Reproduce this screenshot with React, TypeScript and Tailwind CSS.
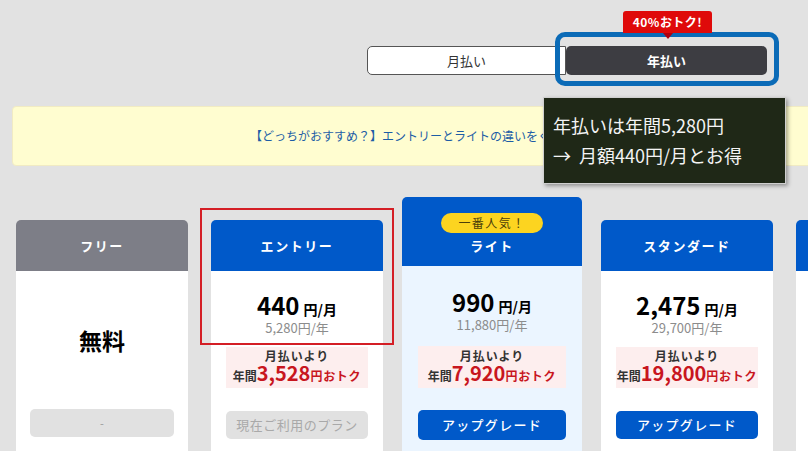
import React from 'react';

type Plan = {
  name: string;
  price?: string;
  yearly?: string;
  saving?: string;
  tone: 'free' | 'blue';
  current?: boolean;
  popular?: boolean;
};

const plans: Plan[] = [
  { name: 'フリー', tone: 'free' },
  { name: 'エントリー', price: '440', yearly: '5,280円/年', saving: '3,528', tone: 'blue', current: true },
  { name: 'ライト', price: '990', yearly: '11,880円/年', saving: '7,920', tone: 'blue', popular: true },
  { name: 'スタンダード', price: '2,475', yearly: '29,700円/年', saving: '19,800', tone: 'blue' },
  { name: 'プレミアム', price: '4,950', yearly: '59,400円/年', saving: '39,600', tone: 'blue' },
];

function PlanCard({ plan }: { plan: Plan }) {
  const headerBg = plan.tone === 'free' ? 'bg-[#7d7e87]' : 'bg-[#0059c9]';

  return (
    <div
      className={`relative shrink-0 flex flex-col ${
        plan.popular ? 'w-[180px] -mx-[4px] -mt-[23px]' : 'w-[172px]'
      }`}
    >
      {plan.popular ? (
        <div className={`${headerBg} rounded-t-[5px] h-[69px] pt-[16px] flex flex-col items-center`}>
          <div className="w-[102px] h-[20px] rounded-full bg-[#fcd420] flex items-center justify-center text-[12px] tracking-[0.12em] text-[#4b3f0a]">
            一番人気！
          </div>
          <div className="mt-[6px] text-white text-[13px] font-bold tracking-[0.12em] leading-[13px]">{plan.name}</div>
        </div>
      ) : (
        <div className={`${headerBg} rounded-t-[5px] h-[51px] flex items-center justify-center`}>
          <div className="text-white text-[13px] font-bold tracking-[0.12em] leading-none">{plan.name}</div>
        </div>
      )}

      <div className={`${plan.popular ? 'bg-[#ebf5ff] px-[16px]' : 'bg-white px-[15px]'} h-[200px] flex flex-col`}>
        {plan.tone === 'free' ? (
          <>
            <div className="h-[138px] flex items-center justify-center text-[23px] font-bold text-black">無料</div>
            <div className="-mx-px h-[28px] rounded-[5px] bg-[#e1e1e1] flex items-center justify-center text-[11px] text-[#999]">
              -
            </div>
          </>
        ) : (
          <>
            <div
              className={`flex items-baseline justify-center text-black font-bold ${
                plan.popular ? 'pt-[23px]' : 'pt-[21px]'
              }`}
            >
              <span className="text-[24px] leading-[26px]">{plan.price}</span>
              <span className="ml-[4px] text-[14px]">円/月</span>
            </div>
            <div className="text-center text-[13px] leading-[16px] text-[#8c8c8c]">{plan.yearly}</div>
            <div
              className={`bg-[#fdeeee] flex flex-col items-center justify-center font-bold whitespace-nowrap ${
                plan.popular ? 'mt-[13px] h-[42px]' : 'mt-[11px] h-[41px]'
              }`}
            >
              <div className="text-[12px] leading-[14px] text-[#333] tracking-[0.08em]">月払いより</div>
              <div className="flex items-baseline leading-[20px]">
                <span className="text-[12px] text-[#333]">年間</span>
                <span className="text-[20px] text-[#c8161e]">{plan.saving}</span>
                <span className="text-[12px] text-[#c8161e] tracking-[0.06em]">円おトク</span>
              </div>
            </div>
            {plan.current ? (
              <div className="mt-[23px] h-[28px] rounded-[5px] bg-[#e1e1e1] flex items-center justify-center text-[13px] text-[#a9a9a9] tracking-[0.04em]">
                現在ご利用のプラン
              </div>
            ) : (
              <div
                className={`rounded-[5px] bg-[#0059c9] flex items-center justify-center text-[13px] font-medium text-white tracking-[0.1em] ${
                  plan.popular ? 'mt-[22px] h-[30px]' : 'mt-[23px] h-[28px]'
                }`}
              >
                アップグレード
              </div>
            )}
          </>
        )}
      </div>

      {plan.current && (
        <div className="absolute -top-[12px] -left-[11px] w-[194px] h-[137px] border-2 border-[#d41e25] pointer-events-none" />
      )}
    </div>
  );
}

export default function App() {
  return (
    <div className="relative w-[808px] h-[451px] overflow-hidden bg-[#e2e2e2] font-['Noto_Sans_CJK_JP',sans-serif]">
      {/* billing toggle */}
      <div className="pt-[46px] pl-[367px] flex">
        <div className="w-[199px] h-[29px] bg-white border border-[#555] rounded-l-[5px] flex items-center justify-center text-[13px] text-[#333]">
          月払い
        </div>
        <div className="relative w-[201px] h-[29px] bg-[#3d3d42] rounded-[5px] flex items-center justify-center text-[13px] font-bold text-white">
          年払い
          <div className="absolute -top-[14px] -left-[11px] -right-[12px] -bottom-[11px] border-[5px] border-[#0b6bb7] rounded-[10px]" />
          <div className="absolute -top-[35px] left-[57px] w-[89px] h-[22px] rounded-t-[3px] bg-[#df0a0a] flex items-center justify-center text-[12px] font-bold text-white tracking-[0.04em]">
            40%おトク!
            <div className="absolute left-1/2 -translate-x-1/2 top-full w-0 h-0 border-l-[5px] border-r-[5px] border-t-[6px] border-l-transparent border-r-transparent border-t-[#b00010]" />
          </div>
        </div>
      </div>

      {/* recommendation banner */}
      <div className="mt-[31px] ml-[12px] w-[820px] h-[60px] rounded-[4px] bg-[#fffdd0] border border-[#f1ebc3] flex items-center pl-[237px] text-[12px] text-[#1d5da6]">
        【どっちがおすすめ？】エントリーとライトの違いをくわしく比較
      </div>

      {/* plan cards */}
      <div className="mt-[54px] pl-[16px] flex items-start gap-[23px]">
        {plans.map((p) => (
          <PlanCard key={p.name} plan={p} />
        ))}
      </div>

      {/* tooltip */}
      <div className="absolute left-[543px] top-[97px] w-[243px] h-[87px] bg-[#1f2817] border border-[#cfcfcf] shadow-[2px_2px_4px_rgba(0,0,0,0.35)] pl-[9px] pt-[12px] text-[18px] leading-[30px] text-[#f4f4f4]">
        <div>年払いは年間5,280円</div>
        <div>→&nbsp;&nbsp;月額440円/月とお得</div>
      </div>
    </div>
  );
}
